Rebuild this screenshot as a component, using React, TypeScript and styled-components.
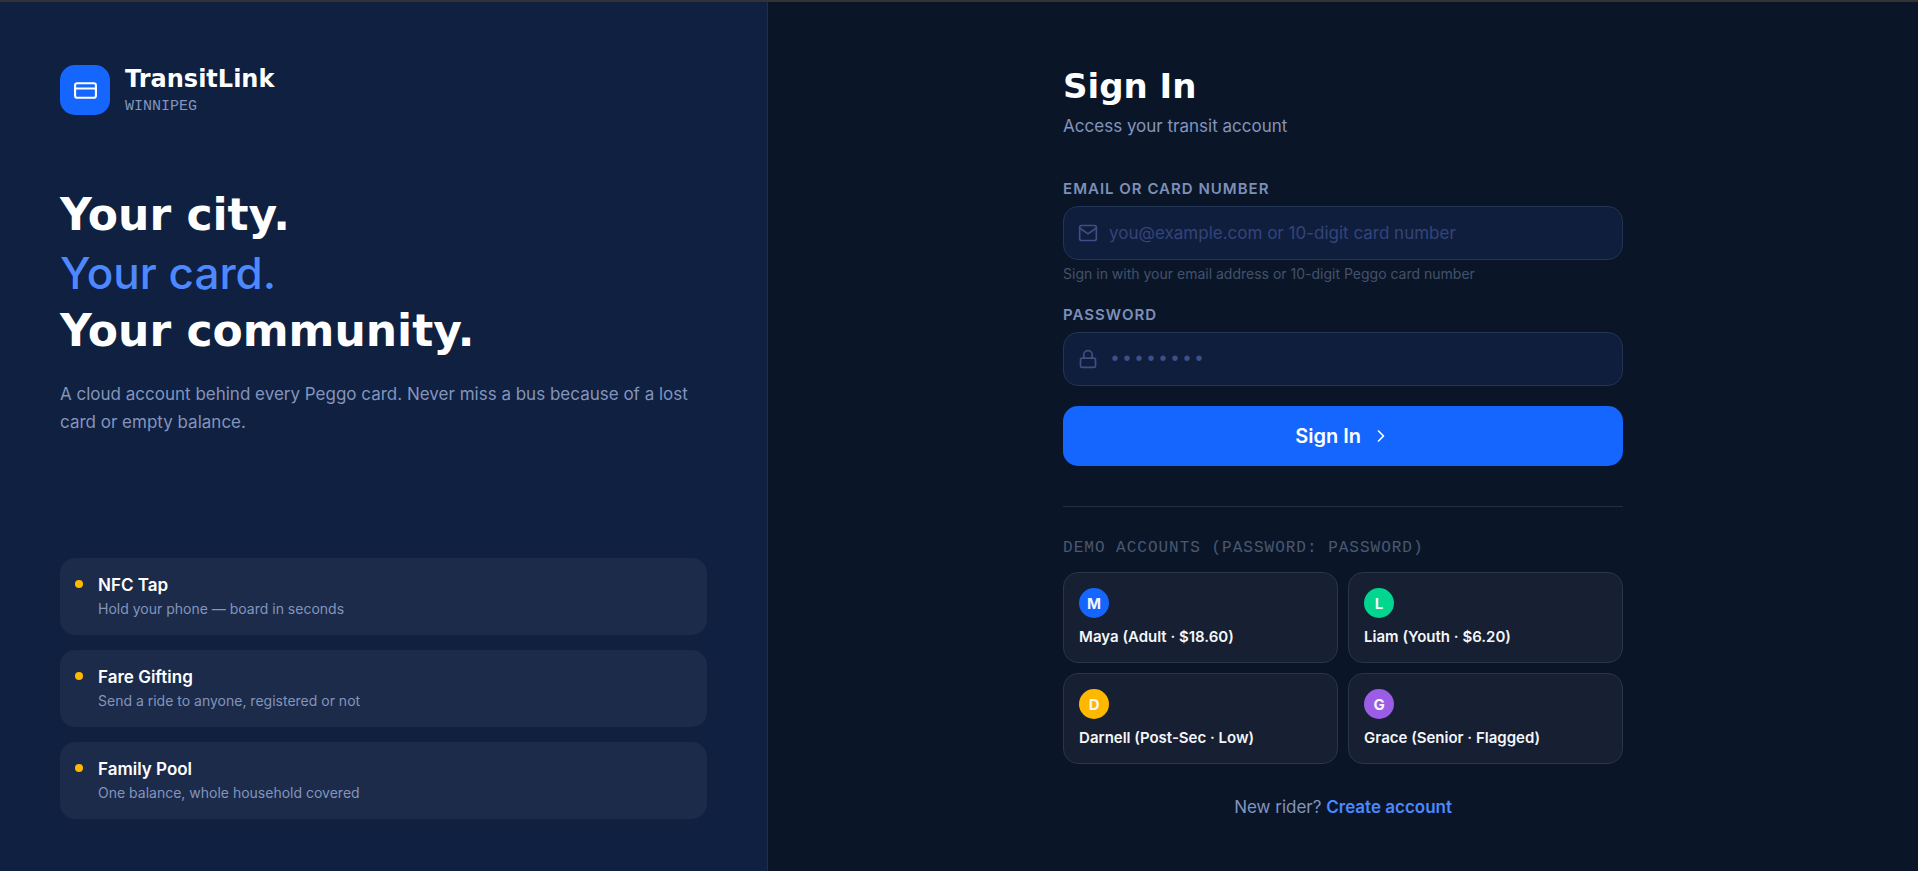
import React from 'react';
import styled, { createGlobalStyle } from 'styled-components';
import { ChevronRight, CreditCard, Lock } from 'lucide-react';

const display = '"DejaVu Sans", Inter, sans-serif';
const mono = '"Liberation Mono", monospace';

const GlobalStyle = createGlobalStyle`
  *, *::before, *::after { box-sizing: border-box; }
  body {
    margin: 0;
    background: #0a1628;
    color: #ffffff;
    font-family: Inter, "Noto Sans", sans-serif;
  }
  h1, h2, p, ul { margin: 0; padding: 0; }
  button, input { font-family: inherit; }
`;

const Page = styled.div`
  display: flex;
  min-height: 100vh;
  border-top: 2px solid #333333;
`;

const BrandPanel = styled.aside`
  width: calc(40% + 1px);
  flex: none;
  display: flex;
  flex-direction: column;
  padding: 60px 60px 52px;
  background: #0f2040;
  border-right: 1px solid #1b2f4e;
`;

const Brand = styled.div`
  display: flex;
  align-items: center;
  gap: 15px;
`;

const BrandMark = styled.div`
  display: grid;
  place-items: center;
  width: 50px;
  height: 50px;
  border-radius: 15px;
  background: #1466ff;
`;

const BrandName = styled.div`
  font-family: ${display};
  font-size: 24px;
  line-height: 34px;
  font-weight: 700;
`;

const BrandCity = styled.div`
  font-family: ${mono};
  font-size: 15px;
  line-height: 22px;
  color: #8494bd;
`;

const Hero = styled.div`
  margin: 68px 0 40px;
`;

const Headline = styled.h1`
  margin-bottom: 20px;
  font-family: ${display};
  font-size: 44px;
  line-height: 58px;
  font-weight: 700;
`;

const Accent = styled.em`
  display: block;
  font-family: Inter, sans-serif;
  font-style: normal;
  font-weight: 500;
  color: #4d88ff;
`;

const Pitch = styled.p`
  font-size: 17px;
  line-height: 28px;
  color: #8494bd;
`;

const FeatureList = styled.ul`
  display: flex;
  flex-direction: column;
  gap: 15px;
  list-style: none;

  && { margin-top: auto; }
`;

const Feature = styled.li`
  display: flex;
  gap: 15px;
  padding: 15px;
  border-radius: 15px;
  background: #1b2b49;
`;

const Dot = styled.span`
  flex: none;
  width: 8px;
  height: 8px;
  margin-top: 7px;
  border-radius: 50%;
  background: #ffb800;
`;

const FeatureTitle = styled.div`
  font-size: 17px;
  line-height: 25px;
  font-weight: 600;
`;

const FeatureText = styled.div`
  font-size: 14px;
  line-height: 22px;
  color: #8494bd;
`;

const FormPanel = styled.main`
  flex: 1;
  display: flex;
  justify-content: center;
  padding: 60px 60px 48px;
`;

const FormColumn = styled.div`
  width: 100%;
  max-width: 560px;
`;

const FormTitle = styled.h2`
  font-family: ${display};
  font-size: 34px;
  line-height: 48px;
  font-weight: 700;
`;

const Subtitle = styled.p`
  && { margin-top: 2px; }
  font-size: 17px;
  line-height: 28px;
  color: #8494bd;
`;

const Form = styled.form`
  display: flex;
  flex-direction: column;
  gap: 20px;
  margin-top: 38px;
`;

const Field = styled.div`
  display: flex;
  flex-direction: column;
`;

const Label = styled.label`
  margin-bottom: 6px;
  font-size: 15px;
  line-height: 22px;
  font-weight: 600;
  letter-spacing: 1px;
  text-transform: uppercase;
  color: #7e8fb8;
`;

const InputBox = styled.div`
  display: flex;
  align-items: center;
  gap: 11px;
  height: 54px;
  padding: 0 14px;
  border: 1px solid #233452;
  border-radius: 15px;
  background: #0f1e3c;
  color: #3d4f85;

  svg { flex: none; }
`;

const Input = styled.input`
  flex: 1;
  min-width: 0;
  height: 100%;
  padding: 0;
  border: 0;
  outline: 0;
  background: transparent;
  font-size: 17px;
  color: #ffffff;

  &::placeholder { color: #34447a; opacity: 1; }
`;

const PasswordInput = styled(Input)`
  font-family: ${mono};
  font-size: 20px;

  &::placeholder { color: #3d4f85; }
`;

const Hint = styled.p`
  && { margin-top: 4px; }
  font-size: 14px;
  line-height: 20px;
  color: #44516b;
`;

const SubmitButton = styled.button`
  display: flex;
  align-items: center;
  justify-content: center;
  gap: 10px;
  height: 60px;
  border: 0;
  border-radius: 15px;
  background: #1466ff;
  color: #ffffff;
  font-size: 20px;
  font-weight: 600;
  cursor: pointer;
`;

const Demo = styled.section`
  margin-top: 40px;
  padding-top: 30px;
  border-top: 1px solid #212d40;
`;

const DemoLabel = styled.p`
  && { margin-bottom: 13px; }
  font-family: ${mono};
  font-size: 16px;
  line-height: 22px;
  letter-spacing: 1px;
  text-transform: uppercase;
  color: #4a5873;
`;

const DemoGrid = styled.div`
  display: grid;
  grid-template-columns: 1fr 1fr;
  gap: 10px;
`;

const DemoCard = styled.button`
  display: flex;
  flex-direction: column;
  gap: 8px;
  padding: 15px;
  border: 1px solid #28354a;
  border-radius: 15px;
  background: #162032;
  color: #f4f6fa;
  font-size: 15px;
  line-height: 21px;
  font-weight: 600;
  text-align: left;
  cursor: pointer;
`;

const Avatar = styled.span<{ $color: string }>`
  display: grid;
  place-items: center;
  width: 30px;
  height: 30px;
  border-radius: 50%;
  background: ${(p) => p.$color};
  font-weight: 700;
`;

const Register = styled.p`
  && { margin-top: 30px; }
  font-size: 17px;
  line-height: 26px;
  text-align: center;
  color: #8494bd;
`;

const RegisterLink = styled.a`
  font-weight: 600;
  color: #4d88ff;
  text-decoration: none;
`;

const MailIcon = () => (
  <svg
    width="20"
    height="20"
    viewBox="0 0 24 24"
    fill="none"
    stroke="currentColor"
    strokeWidth="2"
    strokeLinecap="round"
    strokeLinejoin="round"
    aria-hidden="true"
  >
    <rect x="2" y="3" width="20" height="18" rx="2" />
    <polyline points="22 6 12 13 2 6" />
  </svg>
);

const features = [
  { title: 'NFC Tap', text: 'Hold your phone — board in seconds' },
  { title: 'Fare Gifting', text: 'Send a ride to anyone, registered or not' },
  { title: 'Family Pool', text: 'One balance, whole household covered' },
];

const accounts = [
  { label: 'Maya (Adult · $18.60)', color: '#1466ff' },
  { label: 'Liam (Youth · $6.20)', color: '#00d68f' },
  { label: 'Darnell (Post-Sec · Low)', color: '#ffb800' },
  { label: 'Grace (Senior · Flagged)', color: '#9b5de5' },
];

export default function App() {
  return (
    <>
      <GlobalStyle />
      <Page>
        <BrandPanel>
          <Brand>
            <BrandMark>
              <CreditCard size={25} strokeWidth={2} />
            </BrandMark>
            <div>
              <BrandName>TransitLink</BrandName>
              <BrandCity>WINNIPEG</BrandCity>
            </div>
          </Brand>
          <Hero>
            <Headline>
              Your city.
              <Accent>Your card.</Accent>
              Your community.
            </Headline>
            <Pitch>
              A cloud account behind every Peggo card. Never miss a bus because of a lost card or empty balance.
            </Pitch>
          </Hero>
          <FeatureList>
            {features.map((f) => (
              <Feature key={f.title}>
                <Dot />
                <div>
                  <FeatureTitle>{f.title}</FeatureTitle>
                  <FeatureText>{f.text}</FeatureText>
                </div>
              </Feature>
            ))}
          </FeatureList>
        </BrandPanel>
        <FormPanel>
          <FormColumn>
            <FormTitle>Sign In</FormTitle>
            <Subtitle>Access your transit account</Subtitle>
            <Form onSubmit={(e) => e.preventDefault()}>
              <Field>
                <Label htmlFor="identifier">Email or card number</Label>
                <InputBox>
                  <MailIcon />
                  <Input id="identifier" type="text" placeholder="you@example.com or 10-digit card number" />
                </InputBox>
                <Hint>Sign in with your email address or 10-digit Peggo card number</Hint>
              </Field>
              <Field>
                <Label htmlFor="password">Password</Label>
                <InputBox>
                  <Lock size={20} strokeWidth={2} />
                  <PasswordInput id="password" type="password" placeholder="••••••••" />
                </InputBox>
              </Field>
              <SubmitButton type="submit">
                Sign In
                <ChevronRight size={20} strokeWidth={2} />
              </SubmitButton>
            </Form>
            <Demo>
              <DemoLabel>Demo accounts (password: password)</DemoLabel>
              <DemoGrid>
                {accounts.map((a) => (
                  <DemoCard key={a.label} type="button">
                    <Avatar $color={a.color}>{a.label[0]}</Avatar>
                    {a.label}
                  </DemoCard>
                ))}
              </DemoGrid>
            </Demo>
            <Register>
              New rider? <RegisterLink href="#register">Create account</RegisterLink>
            </Register>
          </FormColumn>
        </FormPanel>
      </Page>
    </>
  );
}
